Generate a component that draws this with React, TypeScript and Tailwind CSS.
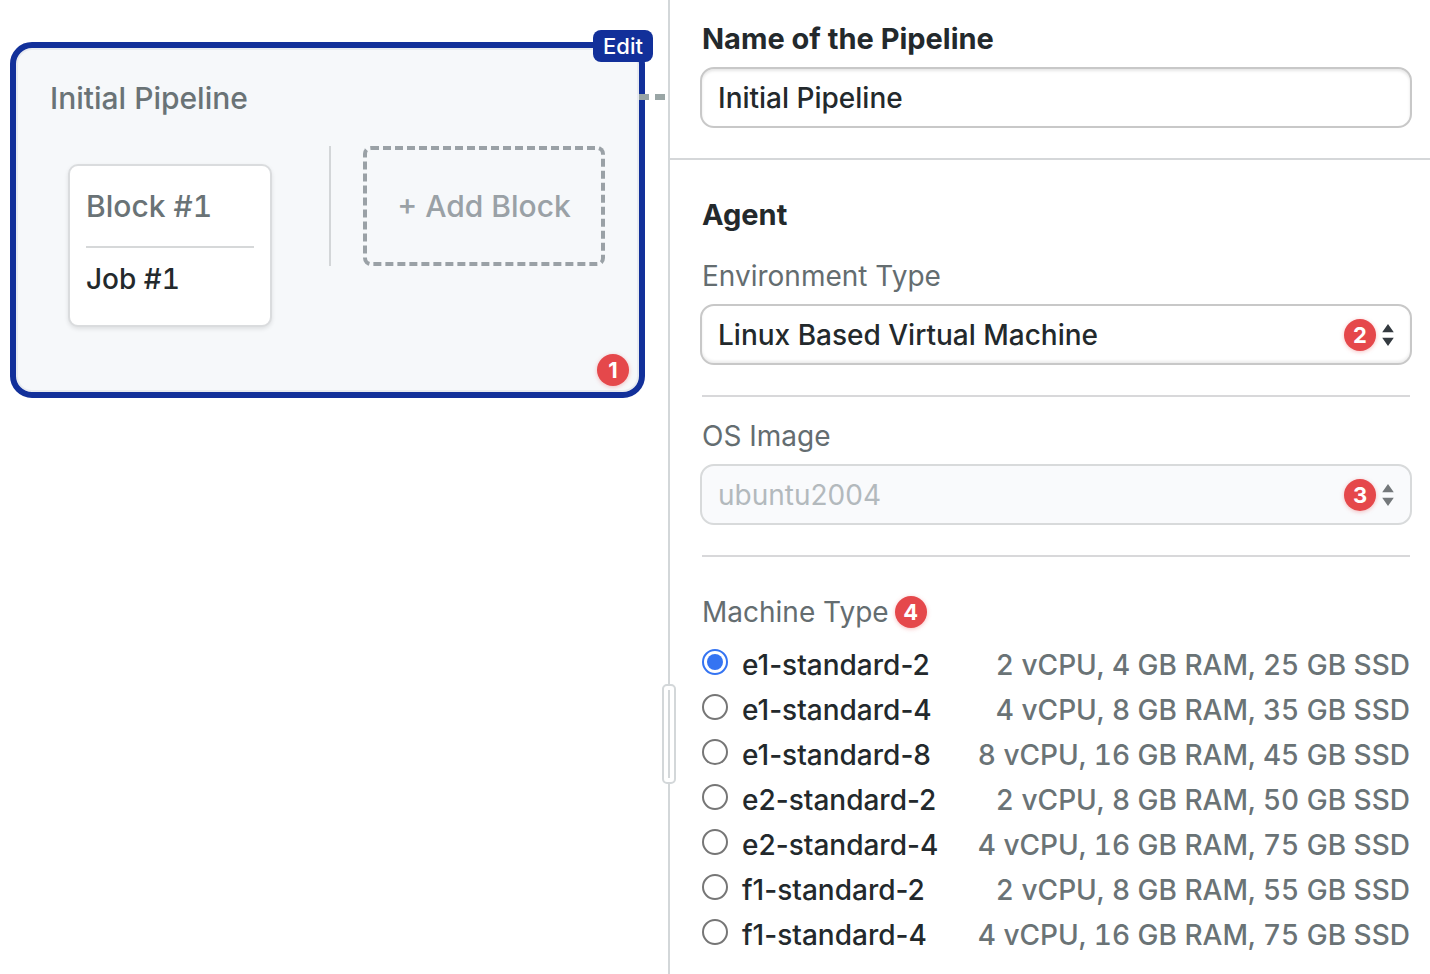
import { useState } from "react";
import type { ReactNode } from "react";

const machines = [
  { name: "e1-standard-2", spec: "2 vCPU, 4 GB RAM, 25 GB SSD" },
  { name: "e1-standard-4", spec: "4 vCPU, 8 GB RAM, 35 GB SSD" },
  { name: "e1-standard-8", spec: "8 vCPU, 16 GB RAM, 45 GB SSD" },
  { name: "e2-standard-2", spec: "2 vCPU, 8 GB RAM, 50 GB SSD" },
  { name: "e2-standard-4", spec: "4 vCPU, 16 GB RAM, 75 GB SSD" },
  { name: "f1-standard-2", spec: "2 vCPU, 8 GB RAM, 55 GB SSD" },
  { name: "f1-standard-4", spec: "4 vCPU, 16 GB RAM, 75 GB SSD" },
];

function Badge({ n }: { n: number }) {
  return (
    <span className="flex size-8 items-center justify-center rounded-full bg-[#e5484b] text-[22px] leading-8 font-bold text-white shadow-[0_1px_4px_rgba(229,72,75,0.35)]">
      {n}
    </span>
  );
}

function SelectField({
  id,
  label,
  value,
  disabled = false,
  badge,
}: {
  id: string;
  label: string;
  value: string;
  disabled?: boolean;
  badge: ReactNode;
}) {
  return (
    <div>
      <label htmlFor={id} className="block font-normal text-[#646d70]">
        {label}
      </label>
      <div className="relative -mx-0.5 mt-2.5">
        <select
          id={id}
          disabled={disabled}
          className="block h-[61px] w-full appearance-none rounded-[14px] border-2 border-[#c8c8c8] bg-white px-4 text-[#23292c] shadow-[inset_0_-2px_3px_rgba(0,0,0,0.08)] disabled:border-[#d8dadb] disabled:bg-[#f9fafc] disabled:font-normal disabled:text-[#b3b9bd] disabled:opacity-100 disabled:shadow-none"
        >
          <option>{value}</option>
        </select>
        <div className="pointer-events-none absolute inset-y-0 right-[18px] flex items-center gap-1.5">
          {badge}
          <svg
            width="12"
            height="24"
            viewBox="0 0 12 24"
            className={disabled ? "text-[#74787b]" : "text-[#343a40]"}
            fill="currentColor"
            aria-hidden="true"
          >
            <path d="M6 1 11.8 9.2H.2zM6 23 11.8 14.8H.2z" />
          </svg>
        </div>
      </div>
    </div>
  );
}

function PipelineCanvas() {
  return (
    <section className="relative w-[670px] shrink-0 border-r-2 border-[#d3d7d9] pt-[42px] pr-[23px] pl-2.5">
      <div className="relative rounded-[22px] border-[6px] border-[#12309a] bg-[#f6f8fa] pt-8 pb-[65px] pl-[34px] shadow-[inset_0_0_0_2px_#e8ebf0]">
        <h2 className="text-[30px] leading-9 text-[#6a7376]">Initial Pipeline</h2>
        <div className="mt-[30px] flex items-start pl-[18px]">
          <div className="mt-[18px] h-[163px] w-[204px] rounded-[10px] border-2 border-[#dadcde] bg-white px-4 tabular-nums shadow-[0_2px_4px_rgba(0,0,0,0.1)]">
            <h3 className="border-b-2 border-[#d6d8d9] py-[22px] text-[30px] leading-9 text-[#6a7376]">
              Block #1
            </h3>
            <p className="pt-[13px] text-[#23292c]">Job #1</p>
          </div>
          <div className="ml-[57px] h-[120px] w-0.5 bg-[#d3d6d8]" />
          <button
            type="button"
            className="ml-8 h-[120px] w-[242px] rounded-lg border-4 border-dashed border-[#9aa1a6] text-[30px] leading-9 text-[#9aa1a6]"
          >
            + Add Block
          </button>
        </div>
        <div className="absolute top-[46px] -right-[26px] flex gap-1.5">
          <span className="h-1.5 w-2.5 bg-[#99a5a5]" />
          <span className="h-1.5 w-2.5 bg-[#99a5a5]" />
        </div>
        <button
          type="button"
          className="absolute -top-[18px] -right-3.5 flex h-8 w-[60px] items-center justify-center rounded-lg bg-[#12309a] text-[22px] leading-8 text-white"
        >
          Edit
        </button>
        <div className="absolute right-2.5 bottom-1.5">
          <Badge n={1} />
        </div>
      </div>
      <div className="absolute top-[684px] -right-2 flex h-[100px] w-3.5 justify-center rounded-[5px] border-2 border-[#d3d7d9] bg-white py-1">
        <span className="w-0.5 bg-[#d3d7d9]" />
      </div>
    </section>
  );
}

export default function App() {
  const [name, setName] = useState("Initial Pipeline");
  const [machine, setMachine] = useState("e1-standard-2");
  return (
    <main className="flex min-h-screen bg-white font-['Inter','Liberation_Sans',sans-serif] text-[28px] leading-9 font-[450]">
      <PipelineCanvas />
      <aside className="min-w-0 flex-1">
        <div className="border-b-2 border-[#d5d7d9] pt-[21px] pr-5 pb-[30px] pl-8">
          <label htmlFor="name" className="block text-[29px] leading-9 font-bold text-[#23292c]">
            Name of the Pipeline
          </label>
          <div className="-mx-0.5 mt-2.5">
            <input
              id="name"
              type="text"
              value={name}
              onChange={(e) => setName(e.target.value)}
              className="block h-[61px] w-full rounded-[14px] border-2 border-[#c8c8c8] bg-white px-4 text-[#23292c] shadow-[inset_0_2px_3px_rgba(0,0,0,0.1)]"
            />
          </div>
        </div>
        <div className="pt-[37px] pr-5 pl-8">
          <h2 className="mb-[25px] text-[29px] leading-9 font-bold text-[#23292c]">Agent</h2>
          <SelectField
            id="env"
            label="Environment Type"
            value="Linux Based Virtual Machine"
            badge={<Badge n={2} />}
          />
          <hr className="mt-[30px] mb-[21px] border-t-2 border-[#d8d8da]" />
          <SelectField
            id="os"
            label="OS Image"
            value="ubuntu2004"
            disabled
            badge={<Badge n={3} />}
          />
          <hr className="mt-[30px] mb-[37px] border-t-2 border-[#d8d8da]" />
          <fieldset>
            <legend className="flex items-center gap-1.5 font-normal text-[#646d70]">
              Machine Type <Badge n={4} />
            </legend>
            <div className="pt-3">
              {machines.map((m) => (
                <label key={m.name} className="flex h-[45px] items-center">
                  <input
                    type="radio"
                    name="machine"
                    checked={machine === m.name}
                    onChange={() => setMachine(m.name)}
                    className="mb-1.5 size-[26px] shrink-0 appearance-none rounded-full border-2 border-[#767676] bg-white bg-clip-content p-[3px] checked:border-[#3574f2] checked:bg-[#3574f2]"
                  />
                  <span className="ml-3.5 text-[#23292c]">{m.name}</span>
                  <span className="ml-auto text-[#6a7376] tabular-nums">{m.spec}</span>
                </label>
              ))}
            </div>
          </fieldset>
        </div>
      </aside>
    </main>
  );
}
